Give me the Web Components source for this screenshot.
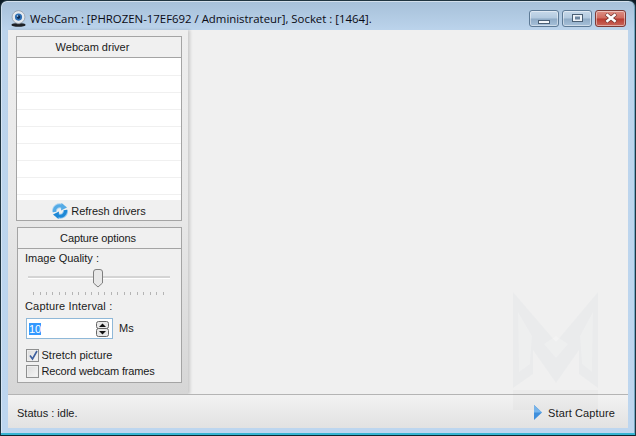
<!DOCTYPE html>
<html>
<head>
<meta charset="utf-8">
<title>WebCam</title>
<style>
    html, body { margin: 0; padding: 0; background: #0b1a24; overflow: hidden; }
    body { width: 636px; height: 436px; font-family: "Liberation Sans", sans-serif; font-size: 11px; color: #1a1a1a; }
</style>
</head>
<body>
<app-window>
    <title-bar slot="title">WebCam : [PHROZEN-17EF692 / Administrateur], Socket : [1464].</title-bar>
    <side-panel slot="side">
        <driver-box></driver-box>
        <capture-options></capture-options>
    </side-panel>
    <status-bar slot="status">Status : idle.</status-bar>
</app-window>

<script>
class AppWindow extends HTMLElement {
    constructor() {
        super();
        this.attachShadow({ mode: "open" });
        this.shadowRoot.innerHTML = `
            <style>
                :host {
                    display: flex;
                    flex-direction: column;
                    width: 636px;
                    height: 436px;
                    box-sizing: border-box;
                    border: 1px solid #1f3440;
                    border-bottom-color: #0d2530;
                    border-radius: 7px 7px 0 0;
                    padding: 0 7px 7px 7px;
                    background: linear-gradient(to bottom, #a6c0d9 0, #bcd4ec 30px, #bdd6ef 100%);
                    box-shadow: inset 0 -2px 0 #35b4d2, inset 1px 0 0 rgba(255,255,255,.4), inset -1px 0 0 rgba(40,120,150,.5), inset 0 1px 0 rgba(255,255,255,.5);
                }
                #client {
                    flex: 1;
                    display: flex;
                    flex-direction: column;
                    min-height: 0;
                    background: #f0f0f0;
                    position: relative;
                }
                #main {
                    flex: 1;
                    display: flex;
                    min-height: 0;
                }
                #canvas { flex: 1; }
                /* faint logo lying over the canvas and the status bar */
                svg {
                    position: absolute;
                    left: 505px;
                    top: 262px;
                    pointer-events: none;
                }
            </style>
            <slot name="title"></slot>
            <div id="client">
                <div id="main">
                    <slot name="side"></slot>
                    <div id="canvas"></div>
                </div>
                <slot name="status"></slot>
                <svg width="86" height="118" viewBox="0 0 86 118">
                    <path d="M0 0 L43 50 L85 0 V96 L66 82 V58 L43 91 L20 58 V82 L0 96 Z" fill="#5a7a90" fill-opacity=".035"/>
                    <path d="M5 20 L19 44 L17 72 L6 80 Z M80 20 L67 44 L69 72 L79 80 Z M31 52 L43 66 L55 52 L43 44 Z" fill="#fff" fill-opacity=".2"/>
                    <rect x="0" y="98" width="85" height="20" fill="#7a7a7a" fill-opacity=".035"/>
                </svg>
            </div>
        `;
    }
}

class TitleBar extends HTMLElement {
    constructor() {
        super();
        this.attachShadow({ mode: "open" });
        this.shadowRoot.innerHTML = `
            <style>
                :host {
                    display: flex;
                    align-items: center;
                    box-sizing: border-box;
                    height: 29px;
                    padding-top: 5px;
                    flex: none;
                    font-family: "Open Sans", sans-serif;
                    font-size: 11.4px;
                    color: #0a0a14;
                }
                #icon { width: 17px; height: 17px; margin: 0 3px 0 2px; flex: none; }
                #text { flex: 1; white-space: nowrap; }
                #caption { display: flex; gap: 3px; margin-right: 2px; }
                .btn {
                    width: 30px;
                    height: 17px;
                    box-sizing: border-box;
                    border: 1px solid #5d7a96;
                    border-radius: 3px;
                    background: linear-gradient(to bottom, #c7d9ea 0, #b2c9df 48%, #8fabc6 52%, #a6c0d9 100%);
                    box-shadow: inset 0 0 0 1px rgba(255,255,255,.45);
                    display: flex;
                    align-items: center;
                    justify-content: center;
                }
                .close {
                    width: 31px;
                    border-color: #7d3a36;
                    background: linear-gradient(to bottom, #dd8f84 0, #cf6a5e 48%, #b83a2f 52%, #c9675c 100%);
                }
                .min { padding-top: 7px; }
            </style>
            <svg id="icon" viewBox="0 0 18 18">
                <ellipse cx="9" cy="15.8" rx="7.5" ry="2" fill="#1e2024"/>
                <rect x="7.5" y="12" width="3" height="3" fill="#7d8288"/>
                <circle cx="9" cy="7.5" r="6.8" fill="#e4e9ee" stroke="#8d98a3" stroke-width="0.8"/>
                <circle cx="9" cy="7.5" r="3.8" fill="#2d6fb4"/>
                <circle cx="9" cy="7.5" r="1.9" fill="#0f2e55"/>
                <circle cx="8" cy="6.3" r="0.8" fill="#cfe6ff"/>
            </svg>
            <span id="text"><slot></slot></span>
            <div id="caption">
                <div class="btn min">
                    <svg width="12" height="4"><rect x="0.5" y="0.5" width="11" height="3" fill="#f4f7fa" stroke="#4a5f74"/></svg>
                </div>
                <div class="btn">
                    <svg width="11" height="8"><rect x="0.5" y="0.5" width="10" height="7" fill="#eef3f8" stroke="#4a5f74"/><rect x="3" y="2.5" width="5" height="3" fill="#6d86a0"/></svg>
                </div>
                <div class="btn close">
                    <svg width="14" height="10" viewBox="0 0 14 10"><path d="M2 1 L12 9 M12 1 L2 9" stroke="#6b2f2b" stroke-width="3.8"/><path d="M2.4 1.3 L11.6 8.7 M11.6 1.3 L2.4 8.7" stroke="#fff" stroke-width="2.6"/></svg>
                </div>
            </div>
        `;
    }
}

class SidePanel extends HTMLElement {
    constructor() {
        super();
        this.attachShadow({ mode: "open" });
        this.shadowRoot.innerHTML = `
            <style>
                :host {
                    display: flex;
                    flex-direction: column;
                    gap: 6px;
                    width: 180px;
                    box-sizing: border-box;
                    padding: 6px 6px 0 8px;
                    background: linear-gradient(to bottom, #eeeeee 0, #e8e8e8 50%, #d6d6d6 100%);
                    box-shadow: 2px 0 3px rgba(0,0,0,.16);
                }
            </style>
            <slot></slot>
        `;
    }
}

class GroupBox extends HTMLElement {
    constructor() {
        super();
        this.attachShadow({ mode: "open" });
        this.shadowRoot.innerHTML = `
            <style>
                :host {
                    display: flex;
                    flex-direction: column;
                    box-sizing: border-box;
                    border: 1px solid #a4a4a4;
                    background: #f0f0f0;
                }
                #head {
                    height: 20px;
                    flex: none;
                    display: flex;
                    align-items: center;
                    justify-content: center;
                    border-bottom: 1px solid #a4a4a4;
                    font-size: 11px;
                    padding-right: var(--head-shift, 0);
                    letter-spacing: var(--head-spacing, 0);
                }
                #body { flex: 1; display: flex; flex-direction: column; min-height: 0; }
            </style>
            <div id="head"></div>
            <div id="body"><slot></slot></div>
        `;
    }
    connectedCallback() {
        this.shadowRoot.querySelector("#head").textContent = this.getAttribute("label");
    }
}

class DriverBox extends HTMLElement {
    constructor() {
        super();
        this.attachShadow({ mode: "open" });
        this.shadowRoot.innerHTML = `
            <style>
                :host { display: block; height: 185px; --head-shift: 13px; }
                group-box { height: 100%; }
                #rows {
                    height: 142px;
                    box-sizing: border-box;
                    border-top: 1px solid #fff;
                    background: linear-gradient(#fff 16px, #f0f0f0 16px) 0 0 / 100% 17px repeat-y;
                }
                #refresh {
                    flex: none;
                    height: 20px;
                    box-sizing: border-box;
                    padding-top: 2px;
                    display: flex;
                    align-items: center;
                    justify-content: center;
                    gap: 3px;
                }
            </style>
            <group-box label="Webcam driver">
                <div id="rows"></div>
                <div id="refresh">
                    <svg width="16" height="16" viewBox="0 0 16 16">
                        <path d="M2.5 9 C2 4.5 6 1.5 10.5 3.5" fill="none" stroke="#a9d3f2" stroke-width="5"/>
                        <path d="M13.5 7 C14 11.5 10 14.5 5.5 12.5" fill="none" stroke="#8cc4ee" stroke-width="5"/>
                        <path d="M2.5 9 C2 4.5 6 1.5 10.5 3.5" fill="none" stroke="#55abe6" stroke-width="3"/>
                        <path d="M13.5 7 C14 11.5 10 14.5 5.5 12.5" fill="none" stroke="#1d88d6" stroke-width="3"/>
                        <path d="M9.5 0 L15 4.5 L9 7.5 Z" fill="#55abe6"/>
                        <path d="M6.5 16 L1 11.5 L7 8.5 Z" fill="#1d88d6"/>
                    </svg>
                    <span>Refresh drivers</span>
                </div>
            </group-box>
        `;
    }
}

class CaptureOptions extends HTMLElement {
    constructor() {
        super();
        this.attachShadow({ mode: "open" });
        this.shadowRoot.innerHTML = `
            <style>
                :host { display: block; height: 156px; margin-left: 1px; --head-shift: 3px; --head-spacing: -.12px; }
                group-box { height: 100%; }
                #wrap { display: flex; flex-direction: column; padding: 3px 7px 0 7px; line-height: 13px; }
                #slider { position: relative; height: 31px; margin: 4px 4px 0 3px; }
                #track {
                    position: absolute; left: 0; right: 0; top: 7px; height: 2px;
                    background: #d4d4d4; border-bottom: 1px solid #fff;
                }
                #thumb { position: absolute; left: 64px; top: 0; }
                #ticks {
                    position: absolute; left: 5px; right: 4px; top: 23px; height: 3px;
                    background: repeating-linear-gradient(to right, #b4b4b4 0, #b4b4b4 1px, transparent 1px, transparent 6.5px);
                }
                .interval { letter-spacing: .17px; }
                #spin { display: flex; align-items: center; gap: 6px; margin: 5px 0 0 1px; }
                #input {
                    width: 87px; height: 21px; box-sizing: border-box;
                    border: 1px solid #8fb8d8; background: #fff;
                    display: flex; align-items: center; padding: 0 3px 0 2px;
                }
                #sel { background: #3399ff; color: #fff; line-height: 12px; }
                #arrows { margin-left: auto; display: flex; flex-direction: column; }
                #arrows svg { display: block; }
                #arrows svg + svg { margin-top: -1px; }
                #checks { display: flex; flex-direction: column; gap: 3px; margin: 10px 0 0 1px; }
                .check { display: flex; align-items: center; gap: 2.5px; height: 13px; }
                .box {
                    width: 13px; height: 13px; box-sizing: border-box; flex: none;
                    border: 1px solid #8e8f8f;
                    background: linear-gradient(135deg, #dcdcdc, #f6f6f6);
                    box-shadow: inset 0 0 0 1px #eee;
                    position: relative;
                }
                .box svg { position: absolute; left: 0; top: -1px; }
                .tight { letter-spacing: -.15px; }
            </style>
            <group-box label="Capture options">
                <div id="wrap">
                    <div>Image Quality :</div>
                    <div id="slider">
                        <div id="track"></div>
                        <svg id="thumb" width="12" height="19" viewBox="0 0 12 19">
                            <path d="M1.5 3 Q1.5 .5 4 .5 H8 Q10.5 .5 10.5 3 V14 L6 18 L1.5 14 Z" fill="#e8e8e8" stroke="#7f7f7f"/>
                        </svg>
                        <div id="ticks"></div>
                    </div>
                    <div class="interval">Capture Interval :</div>
                    <div id="spin">
                        <div id="input">
                            <span id="sel">10</span>
                            <div id="arrows">
                                <svg width="13" height="8"><rect x="0.5" y="0.5" width="12" height="7" rx="2" fill="#e8e8e8" stroke="#666"/><path d="M3 6 L6.5 2.5 L10 6 Z" fill="#111"/></svg>
                                <svg width="13" height="9"><rect x="0.5" y="0.5" width="12" height="8" rx="2" fill="#e8e8e8" stroke="#666"/><path d="M3 3 L6.5 6.5 L10 3 Z" fill="#111"/></svg>
                            </div>
                        </div>
                        <span>Ms</span>
                    </div>
                    <div id="checks">
                        <div class="check">
                            <div class="box">
                                <svg width="13" height="13" viewBox="0 0 13 13"><path d="M3 6.5 L5.5 10 L10 2" fill="none" stroke="#3e5f9e" stroke-width="1.6"/></svg>
                            </div>
                            <span>Stretch picture</span>
                        </div>
                        <div class="check">
                            <div class="box"></div>
                            <span class="tight">Record webcam frames</span>
                        </div>
                    </div>
                </div>
            </group-box>
        `;
    }
}

class StatusBar extends HTMLElement {
    constructor() {
        super();
        this.attachShadow({ mode: "open" });
        this.shadowRoot.innerHTML = `
            <style>
                :host {
                    display: flex;
                    align-items: center;
                    justify-content: space-between;
                    flex: none;
                    height: 34px;
                    box-sizing: border-box;
                    padding: 2px 13px 0 9px;
                    border-top: 1px solid #b4b4b4;
                    background: linear-gradient(to bottom, #f2f2f2 0, #e2e2e2 100%);
                }
                #start { display: flex; align-items: center; gap: 6px; letter-spacing: .12px; }
            </style>
            <span><slot></slot></span>
            <div id="start">
                <svg width="8" height="15" viewBox="0 0 8 15"><path d="M0 0 L8 7.5 L0 15 Z" fill="#3f8fdc"/><path d="M0 0 L8 7.5 L0 7.5 Z" fill="#79b7ee"/></svg>
                <span>Start Capture</span>
            </div>
        `;
    }
}

customElements.define("app-window", AppWindow);
customElements.define("title-bar", TitleBar);
customElements.define("side-panel", SidePanel);
customElements.define("group-box", GroupBox);
customElements.define("driver-box", DriverBox);
customElements.define("capture-options", CaptureOptions);
customElements.define("status-bar", StatusBar);
</script>
</body>
</html>
